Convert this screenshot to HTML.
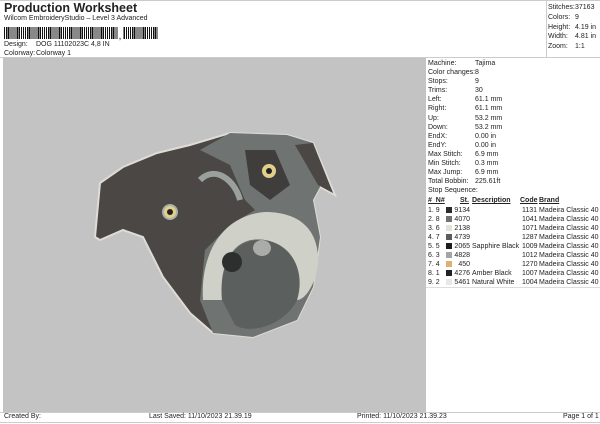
<!DOCTYPE html><html><head><style>
body{margin:0;width:600px;height:424px;background:#fff;font-family:"Liberation Sans",sans-serif;color:#222;position:relative;overflow:hidden}
.a{position:absolute;font-size:7px;white-space:nowrap;line-height:8px}
.g{position:absolute;left:3px;top:58px;width:423px;height:354px;background:#c3c3c3}
.sw{display:inline-block;width:6px;height:6px;vertical-align:-1px}
</style></head><body>
<div class="a" style="left:4px;top:1px;font-size:12.5px;font-weight:bold;line-height:14px">Production Worksheet</div>
<div class="a" style="left:4px;top:15px">Wilcom EmbroideryStudio – Level 3 Advanced</div>
<div style="position:absolute;left:4px;top:27px;width:154px;height:12px;background:repeating-linear-gradient(90deg,#111 0 1.2px,#fff 1.2px 2.1px)"></div>
<div style="position:absolute;left:118px;top:27px;width:5px;height:14px;background:#fff"></div>
<div class="a" style="left:119px;top:34px;font-weight:bold">,</div>
<div class="a" style="left:4px;top:41px">Design:</div><div class="a" style="left:36px;top:41px">DOG 11102023C 4,8 IN</div>
<div class="a" style="left:4px;top:50px">Colorway:</div><div class="a" style="left:36px;top:50px">Colorway 1</div>
<div style="position:absolute;left:0;top:0;width:600px;height:1px;background:#ccc"></div>
<div style="position:absolute;left:546px;top:0;width:1px;height:57px;background:#ccc"></div>
<div style="position:absolute;left:0;top:57px;width:600px;height:1px;background:#ccc"></div>
<div class="a" style="left:548px;top:3px;line-height:9.8px">Stitches:<br>Colors:<br>Height:<br>Width:<br>Zoom:</div>
<div class="a" style="left:575px;top:3px;line-height:9.8px">37163<br>9<br>4.19 in<br>4.81 in<br>1:1</div>
<div class="g"></div>
<svg style="position:absolute;left:0;top:0" width="600" height="424">
<path d="M95,237 L100,183 L123,167 L157,153 L190,145 L230,133 L287,135 L313,143 L335,195 L320,187 L313,200 L320,237 L313,287 L297,320 L253,337 L213,333 L190,313 L163,277 L143,237 L123,230 L100,240 Z" fill="#4a4744" stroke="#dedcd4" stroke-width="2"/>
<path d="M200,150 L230,133 L287,135 L313,143 L320,187 L313,200 L320,237 L313,287 L297,320 L253,337 L213,333 L200,300 L205,250 L230,225 L255,210 L245,200 L230,165 Z" fill="#6f7472"/>
<path d="M245,150 L275,150 L290,185 L270,200 L250,185 Z" fill="#3f3e3c"/>
<path d="M295,145 L313,143 L333,193 L318,185 Z" fill="#4a4744"/>
<path d="M203,300 C200,250 225,215 265,212 C300,212 320,230 318,265 C315,285 305,300 297,300 C300,280 295,250 265,240 C235,235 220,260 222,300 Z" fill="#cfd0c8"/>
<path d="M222,300 C218,255 240,238 265,240 C295,245 305,275 297,300 C285,325 250,335 235,325 Z" fill="#5b605e"/>
<ellipse cx="232" cy="262" rx="10" ry="10" fill="#2d2e2e"/>
<ellipse cx="262" cy="248" rx="9" ry="8" fill="#a9aca8"/>
<circle cx="170" cy="212" r="8" fill="#a7b2ae"/><circle cx="170" cy="212" r="6" fill="#e2cf8a"/><circle cx="170" cy="212" r="3" fill="#222"/>
<circle cx="269" cy="171" r="7" fill="#e2cf8a"/><circle cx="269" cy="171" r="3" fill="#222"/>
<path d="M200,180 C215,165 235,180 240,200" stroke="#9aa09c" stroke-width="6" fill="none"/>
</svg>
<div class="a" style="left:428px;top:59px;line-height:9.1px">Machine:<br>Color changes:<br>Stops:<br>Trims:<br>Left:<br>Right:<br>Up:<br>Down:<br>EndX:<br>EndY:<br>Max Stitch:<br>Min Stitch:<br>Max Jump:<br>Total Bobbin:<br>Stop Sequence:</div>
<div class="a" style="left:475px;top:59px;line-height:9.1px">Tajima<br>8<br>9<br>30<br>61.1 mm<br>61.1 mm<br>53.2 mm<br>53.2 mm<br>0.00 in<br>0.00 in<br>6.9 mm<br>0.3 mm<br>6.9 mm<br>225.61ft</div>
<div class="a" style="left:428px;top:197px;font-weight:bold;text-decoration:underline">#&nbsp; N#</div>
<div class="a" style="left:460px;top:197px;font-weight:bold;text-decoration:underline">St.</div>
<div class="a" style="left:472px;top:197px;font-weight:bold;text-decoration:underline">Description</div>
<div class="a" style="left:520px;top:197px;font-weight:bold;text-decoration:underline">Code</div>
<div class="a" style="left:539px;top:197px;font-weight:bold;text-decoration:underline">Brand</div>
<div class="a" style="left:428px;top:206px;line-height:9px">1. 9<br>2. 8<br>3. 6<br>4. 7<br>5. 5<br>6. 3<br>7. 4<br>8. 1<br>9. 2</div>
<div class="a" style="left:446px;top:206px;line-height:9px"><span class="sw" style="background:#2b2b2b"></span><br><span class="sw" style="background:#6f7270"></span><br><span class="sw" style="background:#e4e1d8"></span><br><span class="sw" style="background:#5b5d5c"></span><br><span class="sw" style="background:#1c1c1e"></span><br><span class="sw" style="background:#9fa8a6"></span><br><span class="sw" style="background:#e0b070"></span><br><span class="sw" style="background:#222"></span><br><span class="sw" style="background:#e8e8e6"></span></div>
<div class="a" style="left:454px;top:206px;line-height:9px;text-align:right;width:16px">9134<br>4070<br>2138<br>4739<br>2065<br>4828<br>450<br>4276<br>5461</div>
<div class="a" style="left:472px;top:206px;line-height:9px">&nbsp;<br>&nbsp;<br>&nbsp;<br>&nbsp;<br>Sapphire Black<br>&nbsp;<br>&nbsp;<br>Amber Black<br>Natural White</div>
<div class="a" style="left:522px;top:206px;line-height:9px">1131<br>1041<br>1071<br>1287<br>1009<br>1012<br>1270<br>1007<br>1004</div>
<div class="a" style="left:539px;top:206px;line-height:9px">Madeira Classic 40<br>Madeira Classic 40<br>Madeira Classic 40<br>Madeira Classic 40<br>Madeira Classic 40<br>Madeira Classic 40<br>Madeira Classic 40<br>Madeira Classic 40<br>Madeira Classic 40</div>
<div style="position:absolute;left:426px;top:287px;width:174px;height:1px;background:#ddd"></div>
<div style="position:absolute;left:0;top:412px;width:600px;height:1px;background:#ccc"></div>
<div style="position:absolute;left:0;top:422px;width:600px;height:1px;background:#ccc"></div>
<div class="a" style="left:4px;top:413px">Created By:</div>
<div class="a" style="left:149px;top:413px">Last Saved: 11/10/2023 21.39.19</div>
<div class="a" style="left:357px;top:413px">Printed: 11/10/2023 21.39.23</div>
<div class="a" style="left:563px;top:413px">Page 1 of 1</div>
</body></html>
